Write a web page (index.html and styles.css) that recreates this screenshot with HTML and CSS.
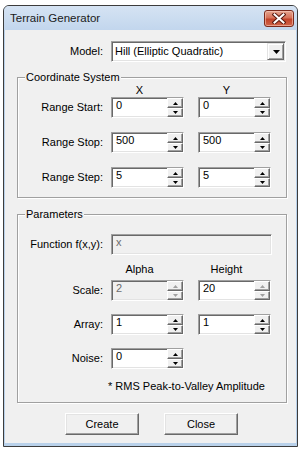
FILE: index.html
```html
<!DOCTYPE html>
<html>
<head>
<meta charset="utf-8">
<title>Terrain Generator</title>
<link rel="stylesheet" href="styles.css">
</head>
<body>
<div class="window">
  <div class="titlebar">
    <span class="title">Terrain Generator</span>
    <div class="close-btn">
      <svg width="14" height="11" viewBox="0 0 14 11">
        <path d="M2.5 1.5 L11.5 9.5 M11.5 1.5 L2.5 9.5" stroke="#5a1a10" stroke-width="4" stroke-linecap="square"/>
        <path d="M2.5 1.5 L11.5 9.5 M11.5 1.5 L2.5 9.5" stroke="#ffffff" stroke-width="2" stroke-linecap="square"/>
      </svg>
    </div>
  </div>
  <div class="client">
    <div class="row model-row">
      <span class="lbl">Model:</span>
      <div class="combo">
        <span class="combo-text">Hill (Elliptic Quadratic)</span>
        <span class="drop"><svg width="7" height="4" viewBox="0 0 7 4"><polygon points="0,0 7,0 3.5,4" fill="#000"/></svg></span>
      </div>
    </div>

    <div class="group coords">
      <span class="legend">Coordinate System</span>
      <div class="row head">
        <span></span><span class="colhead">X</span><span class="colhead">Y</span>
      </div>
      <div class="row">
        <span class="lbl">Range Start:</span>
        <div class="spin"><span class="val">0</span><span class="ud"><span class="sb up"><svg width="5" height="3" viewBox="0 0 5 3"><polygon points="2.5,0 5,3 0,3"/></svg></span><span class="sb down"><svg width="5" height="3" viewBox="0 0 5 3"><polygon points="0,0 5,0 2.5,3"/></svg></span></span></div>
        <div class="spin"><span class="val">0</span><span class="ud"><span class="sb up"><svg width="5" height="3" viewBox="0 0 5 3"><polygon points="2.5,0 5,3 0,3"/></svg></span><span class="sb down"><svg width="5" height="3" viewBox="0 0 5 3"><polygon points="0,0 5,0 2.5,3"/></svg></span></span></div>
      </div>
      <div class="row gap">
        <span class="lbl">Range Stop:</span>
        <div class="spin"><span class="val">500</span><span class="ud"><span class="sb up"><svg width="5" height="3" viewBox="0 0 5 3"><polygon points="2.5,0 5,3 0,3"/></svg></span><span class="sb down"><svg width="5" height="3" viewBox="0 0 5 3"><polygon points="0,0 5,0 2.5,3"/></svg></span></span></div>
        <div class="spin"><span class="val">500</span><span class="ud"><span class="sb up"><svg width="5" height="3" viewBox="0 0 5 3"><polygon points="2.5,0 5,3 0,3"/></svg></span><span class="sb down"><svg width="5" height="3" viewBox="0 0 5 3"><polygon points="0,0 5,0 2.5,3"/></svg></span></span></div>
      </div>
      <div class="row gap">
        <span class="lbl">Range Step:</span>
        <div class="spin"><span class="val">5</span><span class="ud"><span class="sb up"><svg width="5" height="3" viewBox="0 0 5 3"><polygon points="2.5,0 5,3 0,3"/></svg></span><span class="sb down"><svg width="5" height="3" viewBox="0 0 5 3"><polygon points="0,0 5,0 2.5,3"/></svg></span></span></div>
        <div class="spin"><span class="val">5</span><span class="ud"><span class="sb up"><svg width="5" height="3" viewBox="0 0 5 3"><polygon points="2.5,0 5,3 0,3"/></svg></span><span class="sb down"><svg width="5" height="3" viewBox="0 0 5 3"><polygon points="0,0 5,0 2.5,3"/></svg></span></span></div>
      </div>
    </div>

    <div class="group params">
      <span class="legend">Parameters</span>
      <div class="row">
        <span class="lbl">Function f(x,y):</span>
        <div class="field disabled wide"><span class="val">x</span></div>
      </div>
      <div class="row head2">
        <span></span><span class="colhead">Alpha</span><span class="colhead">Height</span>
      </div>
      <div class="row">
        <span class="lbl">Scale:</span>
        <div class="spin disabled off"><span class="val">2</span><span class="ud"><span class="sb up"><svg width="5" height="3" viewBox="0 0 5 3"><polygon points="2.5,0 5,3 0,3"/></svg></span><span class="sb down"><svg width="5" height="3" viewBox="0 0 5 3"><polygon points="0,0 5,0 2.5,3"/></svg></span></span></div>
        <div class="spin off"><span class="val">20</span><span class="ud"><span class="sb up"><svg width="5" height="3" viewBox="0 0 5 3"><polygon points="2.5,0 5,3 0,3"/></svg></span><span class="sb down"><svg width="5" height="3" viewBox="0 0 5 3"><polygon points="0,0 5,0 2.5,3"/></svg></span></span></div>
      </div>
      <div class="row gap2">
        <span class="lbl">Array:</span>
        <div class="spin"><span class="val">1</span><span class="ud"><span class="sb up"><svg width="5" height="3" viewBox="0 0 5 3"><polygon points="2.5,0 5,3 0,3"/></svg></span><span class="sb down"><svg width="5" height="3" viewBox="0 0 5 3"><polygon points="0,0 5,0 2.5,3"/></svg></span></span></div>
        <div class="spin"><span class="val">1</span><span class="ud"><span class="sb up"><svg width="5" height="3" viewBox="0 0 5 3"><polygon points="2.5,0 5,3 0,3"/></svg></span><span class="sb down"><svg width="5" height="3" viewBox="0 0 5 3"><polygon points="0,0 5,0 2.5,3"/></svg></span></span></div>
      </div>
      <div class="row gap2">
        <span class="lbl">Noise:</span>
        <div class="spin"><span class="val">0</span><span class="ud"><span class="sb up"><svg width="5" height="3" viewBox="0 0 5 3"><polygon points="2.5,0 5,3 0,3"/></svg></span><span class="sb down"><svg width="5" height="3" viewBox="0 0 5 3"><polygon points="0,0 5,0 2.5,3"/></svg></span></span></div>
      </div>
      <div class="note">* RMS Peak-to-Valley Amplitude</div>
    </div>

    <div class="buttons">
      <button class="btn">Create</button>
      <button class="btn">Close</button>
    </div>
  </div>
</div>
</body>
</html>
```
FILE: styles.css
```css
* { box-sizing: border-box; }

body {
  margin: 0;
  background: #ffffff;
  font-family: "Liberation Sans", Arial, sans-serif;
  font-size: 11px;
  line-height: 13px;
  color: #000;
}

.window {
  margin: 5px 0 0 3px;
  width: 295px;
  height: 442px;
  border: 1px solid #3c3c3c;
  border-radius: 6px 6px 0 0;
  background: #b9d1ea;
  display: flex;
  flex-direction: column;
}

.titlebar {
  height: 24px;
  flex: none;
  display: flex;
  align-items: center;
  justify-content: space-between;
  padding: 0 3px 0 6px;
  background: linear-gradient(#d5e3f3, #c2d6ed);
  border-radius: 5px 5px 0 0;
}

.title {
  font-size: 11.5px;
  color: #1a1a1a;
  padding-top: 1px;
}

.close-btn {
  width: 30px;
  height: 17px;
  border: 1px solid #7b2a1c;
  border-radius: 3px;
  background: linear-gradient(#e4a590 0%, #d67158 45%, #c2432a 55%, #d0654a 100%);
  box-shadow: inset 0 0 0 1px rgba(255, 210, 195, 0.55);
  display: flex;
  align-items: center;
  justify-content: center;
  margin-top: 1px;
}

.client {
  flex: 1;
  margin: 0 1px 3px 1px;
  background: #f0f0f0;
  padding-top: 11px;
}

.row {
  display: grid;
  grid-template-columns: 93px 87px 73px;
  height: 21px;
  align-items: center;
}

.lbl {
  text-align: right;
  padding-right: 8px;
  white-space: nowrap;
}

.model-row { padding-left: 13px; }

.combo {
  grid-column: 2 / 4;
  width: 175px;
  height: 21px;
  background: #fff;
  border: 1px solid;
  border-color: #a0a0a0 #ffffff #ffffff #a0a0a0;
  box-shadow: inset 1px 1px 0 #696969, inset -1px -1px 0 #e3e3e3;
  padding: 1px;
  display: flex;
  align-items: center;
}

.combo-text {
  flex: 1;
  padding-left: 2px;
  white-space: nowrap;
}

.drop {
  width: 17px;
  height: 17px;
  background: #f0f0f0;
  border: 1px solid;
  border-color: #e3e3e3 #696969 #696969 #e3e3e3;
  box-shadow: inset 1px 1px 0 #fff, inset -1px -1px 0 #a0a0a0;
  display: flex;
  align-items: center;
  justify-content: center;
}

.drop svg { display: block; margin-left: 1px; }

.group {
  position: relative;
  margin-left: 12px;
  width: 270px;
  border: 1px solid #a0a0a0;
  box-shadow: inset 1px 1px 0 #fff, 1px 1px 0 #fff;
}

.coords { margin-top: 15px; padding-bottom: 9px; }
.params { margin-top: 16px; padding-top: 19px; padding-bottom: 9px; }

.legend {
  position: absolute;
  top: -7px;
  left: 7px;
  padding: 0 1px;
  background: #f0f0f0;
  line-height: 13px;
}

.head { height: 19px; align-items: end; }
.head2 { height: 25px; align-items: end; padding-bottom: 4px; }

.colhead {
  width: 57px;
  text-align: center;
}

.gap { margin-top: 14px; }
.gap2 { margin-top: 13px; }

.spin, .field {
  width: 73px;
  height: 21px;
  background: #fff;
  border: 1px solid;
  border-color: #a0a0a0 #ffffff #ffffff #a0a0a0;
  box-shadow: inset 1px 1px 0 #696969, inset -1px -1px 0 #e3e3e3;
  display: flex;
  align-items: stretch;
}

.field.wide {
  grid-column: 2 / 4;
  width: 161px;
}

.val {
  flex: 1;
  padding: 1px 0 0 4px;
  line-height: 13px;
}

.disabled { background: #f0f0f0; }
.disabled .val { color: #6d6d6d; }

.ud {
  width: 16px;
  display: flex;
  flex-direction: column;
}

.sb {
  background: #f0f0f0;
  border: 1px solid;
  border-color: #ffffff #696969 #696969 #ffffff;
  box-shadow: inset -1px -1px 0 #a0a0a0;
  display: flex;
  align-items: center;
  justify-content: center;
}

.sb.up { height: 10px; }
.sb.down { height: 9px; }
.sb svg { display: block; fill: #000; }
.off .sb svg { fill: #a0a0a0; }

.note {
  margin-top: 11px;
  padding-left: 90px;
  line-height: 13px;
  white-space: nowrap;
}

.buttons {
  margin-top: 10px;
  padding-left: 60px;
  display: flex;
  gap: 25px;
}

.btn {
  width: 74px;
  height: 22px;
  font: inherit;
  color: #000;
  background: #f0f0f0;
  border: 1px solid;
  border-color: #ffffff #696969 #696969 #ffffff;
  box-shadow: inset -1px -1px 0 #a0a0a0, inset 1px 1px 0 #e3e3e3;
  padding: 0;
  border-radius: 0;
}
```
